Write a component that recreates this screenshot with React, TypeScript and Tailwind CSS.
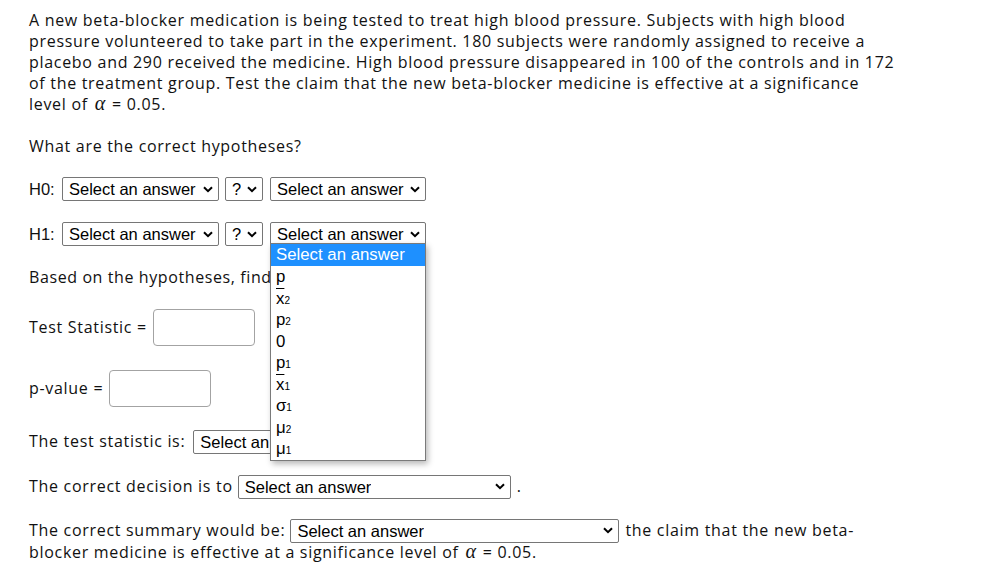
import React from "react";

const Chevron = () => (
  <svg width="10" height="7" viewBox="0 0 10 7" className="shrink-0">
    <polyline points="1,1.2 5,5.2 9,1.2" fill="none" stroke="#000" strokeWidth="2" />
  </svg>
);

function Sel({ className, text = "Select an answer" }: { className: string; text?: string }) {
  return (
    <span
      className={
        "inline-flex items-center justify-between h-[24px] border border-[#767676] rounded-[2px] bg-white pl-[6px] pr-[5px] text-[16.5px] leading-[18px] tracking-normal font-normal text-black font-['Liberation_Sans',Arial,sans-serif] shrink-0 " +
        className
      }
    >
      <span className="whitespace-nowrap overflow-hidden">{text}</span>
      <Chevron />
    </span>
  );
}

const Alpha = () => (
  <span className="font-['Liberation_Serif',serif] italic text-[20px] leading-[16px] tracking-normal mx-[2px]">α</span>
);

const Xbar = ({ sub }: { sub: string }) => (
  <span>
    <span className="overline">x</span>
    <span className="text-[10px]">{sub}</span>
  </span>
);

const Sym = ({ base, sub }: { base: string; sub: string }) => (
  <span>
    {base}
    <span className="text-[10px]">{sub}</span>
  </span>
);

export default function App() {
  const items: React.ReactNode[] = [
    "p",
    <Xbar sub="2" />,
    <Sym base="p" sub="2" />,
    "0",
    <Sym base="p" sub="1" />,
    <Xbar sub="1" />,
    <Sym base="σ" sub="1" />,
    <Sym base="μ" sub="2" />,
    <Sym base="μ" sub="1" />,
  ];
  return (
    <div className="min-h-[582px] w-[1001px] bg-white pl-[29px] pt-[10px] text-[16px] leading-[21px] text-[#111] font-medium tracking-[0.7px] font-['Open_Sans',sans-serif]">
      <p>
        A new beta-blocker medication is being tested to treat high blood pressure. Subjects with high blood
        <br />
        pressure volunteered to take part in the experiment. 180 subjects were randomly assigned to receive a
        <br />
        placebo and 290 received the medicine. High blood pressure disappeared in 100 of the controls and in 172
        <br />
        of the treatment group. Test the claim that the new beta-blocker medicine is effective at a significance
        <br />
        level of <Alpha /> = 0.05.
      </p>
      <p className="mt-[21px]">What are the correct hypotheses?</p>

      <div className="mt-[20px] flex items-center h-[24px]">
        <span className="w-[33px] font-['Liberation_Sans',Arial,sans-serif] text-[16.5px] tracking-normal">H0:</span>
        <Sel className="w-[157px]" />
        <Sel className="w-[38px] ml-[6px]" text="?" />
        <Sel className="w-[156px] ml-[7px]" />
      </div>

      <div className="mt-[21px] flex items-center h-[24px]">
        <span className="w-[33px] font-['Liberation_Sans',Arial,sans-serif] text-[16.5px] tracking-normal">H1:</span>
        <Sel className="w-[157px]" />
        <Sel className="w-[38px] ml-[6px]" text="?" />
        <span className="relative ml-[7px] inline-flex">
          <Sel className="w-[156px]" />
          <div className="absolute left-0 top-[21px] z-10 w-[156px] border border-[#7a7a7a] bg-white shadow-[2px_3px_6px_rgba(0,0,0,0.28)] font-['Liberation_Sans',Arial,sans-serif] text-[16.8px] font-normal tracking-normal text-black">
            <div className="h-[22px] leading-[22px] bg-[#1e90ff] text-white pl-[5px]">Select an answer</div>
            {items.map((it, i) => (
              <div key={i} className="h-[21.5px] leading-[21.5px] pl-[5px]">
                {it}
              </div>
            ))}
          </div>
        </span>
      </div>

      <p className="mt-[21px] whitespace-nowrap tracking-[0.6px]">Based on the hypotheses, find the following:</p>

      <div className="mt-[21px] flex items-center h-[37px]">
        <span>Test Statistic =</span>
        <span className="ml-[6px] w-[102px] h-[37px] border border-[#a3a3a3] rounded-[4px] bg-white" />
      </div>

      <div className="mt-[24px] flex items-center h-[37px]">
        <span>p-value =</span>
        <span className="ml-[6px] w-[102px] h-[37px] border border-[#a3a3a3] rounded-[4px] bg-white" />
      </div>

      <div className="mt-[23px] flex items-center h-[23px]">
        <span>The test statistic is:</span>
        <Sel className="w-[157px] ml-[8px] h-[23px]" />
      </div>

      <div className="mt-[22px] flex items-center h-[23px]">
        <span>The correct decision is to</span>
        <Sel className="w-[273px] ml-[5px] h-[23px]" />
        <span className="ml-[6px]">.</span>
      </div>

      <div className="mt-[21px] flex items-center h-[23px]">
        <span>The correct summary would be:</span>
        <Sel className="w-[329px] ml-[5px] h-[23px]" />
        <span className="ml-[6px]">the claim that the new beta-</span>
      </div>
      <p>
        blocker medicine is effective at a significance level of <Alpha /> = 0.05.
      </p>
    </div>
  );
}
